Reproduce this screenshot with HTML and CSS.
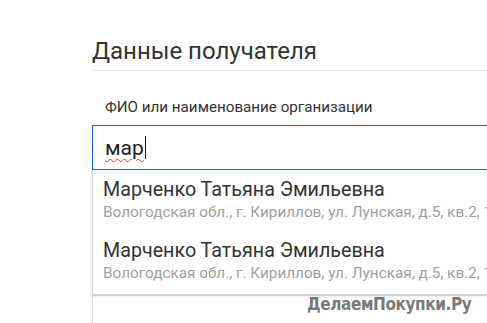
FILE: index.html
```html
<!DOCTYPE html>
<html lang="ru">
  <head>
    <meta charset="UTF-8" />
    <meta name="viewport" content="width=device-width, initial-scale=1.0" />
    <title>Данные получателя</title>
    <link rel="stylesheet" href="styles.css">
  </head>
  <body>
    <div class="section">
      <h2 class="section-title">Данные получателя</h2>

      <div class="field">
        <label class="field-label" for="fio">ФИО или наименование организации</label>
        <div class="input-wrap">
          <div class="input" id="fio"><span class="typed">мар</span><span class="caret"></span></div>

          <ul class="suggestions">
            <li class="suggestion">
              <div class="suggestion-name">Марченко Татьяна Эмильевна</div>
              <div class="suggestion-addr">Вологодская обл., г. Кириллов, ул. Лунская, д.5, кв.2, 161100</div>
            </li>
            <li class="suggestion">
              <div class="suggestion-name">Марченко Татьяна Эмильевна</div>
              <div class="suggestion-addr">Вологодская обл., г. Кириллов, ул. Лунская, д.5, кв.2, 161100</div>
            </li>
          </ul>
        </div>
      </div>

      <div class="field next-field"></div>
    </div>

    <div class="watermark">ДелаемПокупки.Ру</div>
  </body>
</html>
```

FILE: styles.css
```css
html,
body {
  margin: 0;
  height: 100%;
  overflow: hidden;
}

body {
  font-family: 'Roboto', 'Liberation Sans', sans-serif;
  background-color: #fff;
  color: #333;
  position: relative;
}

.section {
  padding: 37px 0 0 92px;
  width: 460px;
}

.section-title {
  margin: 0;
  font-size: 24px;
  font-weight: 400;
  line-height: 28px;
  color: #333;
  padding-bottom: 5px;
  border-bottom: 1px solid #e3e3e3;
}

.field {
  margin-top: 27px;
}

.field-label {
  display: block;
  padding-left: 13px;
  font-size: 15.2px;
  line-height: 18px;
  color: #333;
  margin-bottom: 9px;
}

.input-wrap {
  position: relative;
}

.input {
  height: 45px;
  border: 1px solid #1e66c2;
  border-right: none;
  box-sizing: border-box;
  padding-left: 12px;
  font-size: 21px;
  color: #222;
  display: flex;
  align-items: center;
}

.typed {
  text-decoration: underline wavy #e53935;
  text-decoration-thickness: 1px;
  text-underline-offset: 3px;
}

.caret {
  display: inline-block;
  width: 1px;
  height: 23px;
  background-color: #111;
  margin-left: 1px;
}

.suggestions {
  list-style: none;
  margin: 0;
  padding: 0 0 2px;
  background-color: #fff;
  border-left: 1px solid #d2d2d2;
  border-bottom: 2px solid #cfcfcf;
  box-shadow: -1px 1px 2px rgba(0, 0, 0, 0.08);
  position: relative;
  z-index: 2;
  white-space: nowrap;
  overflow: hidden;
}

.suggestion {
  padding: 8px 0 8px 10px;
}

.suggestion-name {
  font-size: 19.7px;
  line-height: 24px;
  color: #333;
}

.suggestion-addr {
  font-size: 15.3px;
  line-height: 21px;
  color: #a0a0a0;
}

.next-field {
  margin-top: 0;
  height: 60px;
  border-left: 1px solid #e0e0e0;
}

.watermark {
  position: absolute;
  left: 307px;
  top: 294px;
  font-family: 'DejaVu Sans', sans-serif;
  font-size: 17px;
  font-weight: 700;
  font-stretch: condensed;
  letter-spacing: -0.4px;
  color: #7a7a7a;
}
```
